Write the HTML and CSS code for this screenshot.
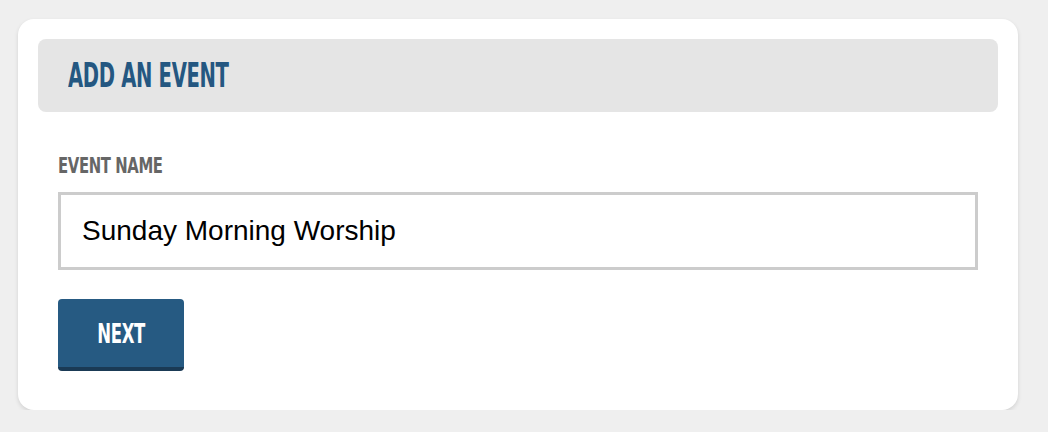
FILE: index.html
```html
<!DOCTYPE html>
<html lang="en">
<head>
  <meta charset="UTF-8">
  <meta name="viewport" content="width=device-width, initial-scale=1">
  <title>Add an Event</title>
  <link rel="stylesheet" href="styles.css">
</head>
<body>
  <div class="card">
    <div class="card-header">
      <h1 class="card-title"><span class="condensed">Add an Event</span></h1>
    </div>

    <form class="event-form" onsubmit="return false">
      <label for="event-name" class="field-label"><span class="condensed">Event Name</span></label>
      <input type="text" id="event-name" class="field-input" value="Sunday Morning Worship">
      <button type="submit" class="btn-next"><span class="condensed">Next</span></button>
    </form>
  </div>
</body>
</html>
```

FILE: styles.css
```css
html, body {
  margin: 0;
  padding: 0;
  background-color: #efefef;
  font-family: 'Liberation Sans', Arial, sans-serif;
}

.card {
  width: 1000px;
  height: 391px;
  box-sizing: border-box;
  margin: 19px 0 0 18px;
  padding: 20px;
  background-color: #ffffff;
  border-radius: 16px;
  box-shadow: 0 2px 4px rgba(0, 0, 0, 0.12);
}

/* no condensed display face installed, so squeeze the bold one */
.condensed {
  display: inline-block;
  transform-origin: left center;
}

.card-header {
  height: 73px;
  display: flex;
  align-items: center;
  padding: 0 30px;
  background-color: #e5e5e5;
  border-radius: 8px;
}

.card-title {
  margin: 0;
  font-family: 'DejaVu Sans Condensed', 'DejaVu Sans', sans-serif;
  font-weight: bold;
  font-size: 33px;
  line-height: 1;
  letter-spacing: -0.5px;
  text-transform: uppercase;
  color: #245781;
  white-space: nowrap;
}

.card-title .condensed {
  transform: scaleX(0.66);
}

.event-form {
  display: flex;
  flex-direction: column;
  align-items: flex-start;
  padding: 43px 20px 0 20px;
}

.field-label {
  font-family: 'DejaVu Sans Condensed', 'DejaVu Sans', sans-serif;
  font-weight: bold;
  font-size: 22px;
  line-height: 22px;
  letter-spacing: -0.5px;
  text-transform: uppercase;
  color: #666666;
  white-space: nowrap;
}

.field-label .condensed {
  transform: scaleX(0.75);
}

.field-input {
  width: 100%;
  height: 78px;
  box-sizing: border-box;
  margin-top: 15px;
  padding: 0 21px;
  border: 3px solid #cccccc;
  border-radius: 0;
  font-family: 'Liberation Sans', Arial, sans-serif;
  font-size: 28px;
  color: #000000;
  outline: none;
}

.btn-next {
  width: 126px;
  height: 72px;
  margin-top: 29px;
  padding: 0;
  border: none;
  border-bottom: 4px solid #1a3a55;
  border-radius: 4px;
  background-color: #265a82;
  color: #ffffff;
  font-family: 'DejaVu Sans Condensed', 'DejaVu Sans', sans-serif;
  font-weight: bold;
  font-size: 27px;
  letter-spacing: -0.5px;
  text-transform: uppercase;
  cursor: pointer;
}

.btn-next .condensed {
  transform-origin: center center;
  transform: scaleX(0.68);
}
```
